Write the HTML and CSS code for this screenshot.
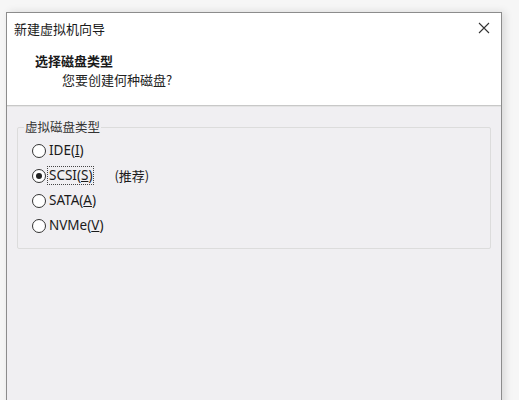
FILE: index.html
```html
<!DOCTYPE html>
<html lang="zh-CN">
<head>
    <meta charset="UTF-8">
    <title>新建虚拟机向导</title>
    <link rel="stylesheet" href="styles.css">
</head>
<body>
    <div class="window">
        <div class="titlebar">
            <span class="title">新建虚拟机向导</span>
            <span class="close">
                <svg width="12" height="12" viewBox="0 0 12 12"><path d="M1 1 L11 11 M11 1 L1 11" stroke="#333" stroke-width="1.1" fill="none"/></svg>
            </span>
        </div>
        <div class="header">
            <h2>选择磁盘类型</h2>
            <p>您要创建何种磁盘?</p>
        </div>
        <div class="content">
            <fieldset class="group">
                <legend>虚拟磁盘类型</legend>
                <label class="opt"><span class="radio"></span><span class="txt">IDE(<u>I</u>)</span></label>
                <label class="opt"><span class="radio on"></span><span class="txt focus">SCSI(<u>S</u>)</span><span class="note">(推荐)</span></label>
                <label class="opt"><span class="radio"></span><span class="txt">SATA(<u>A</u>)</span></label>
                <label class="opt"><span class="radio"></span><span class="txt">NVMe(<u>V</u>)</span></label>
            </fieldset>
        </div>
    </div>
</body>
</html>
```

FILE: styles.css
```css
body {
    margin: 0;
    background: #f6f6f6;
    font-family: "Noto Sans CJK SC", "Noto Sans", sans-serif;
    color: #1a1a1a;
    overflow: hidden;
}

.window {
    margin: 12px 0 0 6px;
    width: 494px;
    height: 400px;
    border: 1px solid #8c8c8c;
    border-bottom: none;
    background: #f0eff2;
    box-shadow: 3px 0 8px rgba(0, 0, 0, 0.12);
}

.titlebar {
    height: 30px;
    background: #fff;
    display: flex;
    align-items: center;
    justify-content: space-between;
    padding: 0 10px 0 7px;
}

.title {
    font-size: 13px;
}

.close {
    display: flex;
    margin-right: 1px;
}

.header {
    background: #fff;
    height: 62px;
    border-bottom: 1px solid #c8c8c8;
    box-shadow: 0 1px 0 #e4e4e4;
}

.header h2 {
    margin: 0;
    padding: 9px 0 0 28px;
    font-size: 13px;
    font-weight: bold;
    line-height: 18px;
}

.header p {
    margin: 0;
    padding: 1px 0 0 55px;
    font-size: 13px;
    line-height: 18px;
    color: #222;
}

.content {
    padding: 13px 10px 0 10px;
}

.group {
    margin: 0;
    padding: 3px 0 10px 14px;
    border: 1px solid #dcdcdc;
    border-radius: 2px;
    width: 474px;
    box-sizing: border-box;
}

.group legend {
    font-size: 12.5px;
    padding: 0 1px;
    margin-left: -8px;
    color: #333;
    line-height: 16px;
}

.opt {
    display: flex;
    align-items: center;
    height: 25px;
    font-size: 13px;
}

.radio {
    width: 12px;
    height: 12px;
    border: 1px solid #333;
    border-radius: 50%;
    background: #fff;
    display: flex;
    align-items: center;
    justify-content: center;
    margin-right: 1px;
}

.radio.on::after {
    content: "";
    width: 6px;
    height: 6px;
    border-radius: 50%;
    background: #222;
}

.txt {
    font-family: "Noto Sans", sans-serif;
    font-size: 13.5px;
    padding: 0 1px;
    border: 1px dotted transparent;
    line-height: 17px;
}

.txt.focus {
    border-color: #444;
}

.note {
    margin-left: 20px;
}
```
